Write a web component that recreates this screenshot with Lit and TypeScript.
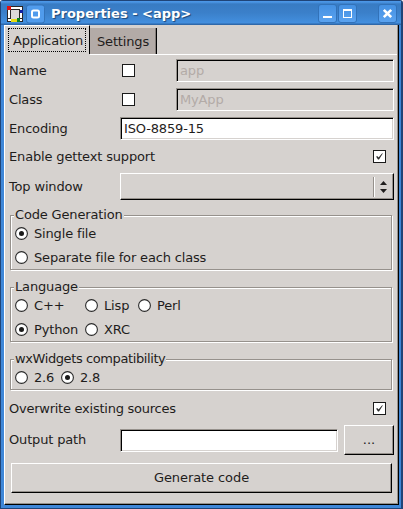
import { LitElement, html, css, svg } from "lit";
import { customElement, property } from "lit/decorators.js";
import { classMap } from "lit/directives/class-map.js";

@customElement("check-box")
class CheckBox extends LitElement {
  @property({ type: Boolean }) checked = false;
  static styles = css`
    :host { display: block; width: 13px; height: 13px; flex: none; }
    svg { display: block; }
  `;
  render() {
    return html`<svg width="13" height="13" viewBox="0 0 13 13">
      <rect x="0.5" y="0.5" width="12" height="12" fill="#fff" stroke="#1a1a1a" />
      ${this.checked
        ? svg`<path d="M3 6.6l1.6-.3 1 1.3L9.2 3.3l.6.3L6 9.6H5z" fill="#2a2a2a" />`
        : ""}
    </svg>`;
  }
}

@customElement("radio-item")
class RadioItem extends LitElement {
  @property() label = "";
  @property({ type: Boolean }) checked = false;
  static styles = css`
    :host { display: flex; align-items: center; height: 24px; }
    svg { display: block; flex: none; margin: -1px 6px 0 0; }
    span { line-height: 16px; white-space: pre; }
  `;
  render() {
    return html`<svg width="13" height="13" viewBox="0 0 13 13">
        <circle cx="6.5" cy="6.5" r="5.9" fill="#fff" stroke="#2a2a2a" stroke-width="1.1" />
        ${this.checked ? svg`<circle cx="6.5" cy="6.5" r="2.5" fill="#1a1a1a" />` : ""}
      </svg><span>${this.label}</span>`;
  }
}

@customElement("app-root")
class AppRoot extends LitElement {
  static styles = css`
    :host {
      display: block; width: 403px; height: 509px; overflow: hidden;
      font: 13px/16px "DejaVu Sans", sans-serif; color: #1f1d1c;
      letter-spacing: -0.16px;
    }
    * { box-sizing: border-box; }
    .window {
      width: 403px; height: 509px; display: flex; flex-direction: column;
      background: #3f87d8; padding: 0 2px 3px 2px;
      border: 1px solid #1f4478; border-right-width: 2px;
      border-radius: 3px 3px 0 0;
    }
    .title {
      height: 24px; flex: none; display: flex; align-items: center;
      margin: 0 -2px; padding: 1px 4px 0 6px;
      background: linear-gradient(#4b96e6 0, #4b96e6 1px, #387bc3 3px, #3b80ca 12px, #438fdf 22px, #2e68aa 23px);
    }
    .title svg { display: block; flex: none; }
    .caption {
      flex: 1; margin-left: 6px; color: #fff; font-weight: bold; font-size: 13px;
      letter-spacing: 0; text-shadow: 1px 1px 1px #1c4677; white-space: pre;
    }
    .wbtn {
      width: 19px; height: 19px; flex: none; border-radius: 3px;
      border: 1px solid #3272b9; background: linear-gradient(#4490e2, #5ba3f0);
    }
    .max { margin-left: 1px; }
    .close { margin-left: 21px; }
    .client {
      flex: 1; margin-left: 1px; display: flex; flex-direction: column; background: #d6d2cf;
      border-left: 1px solid #fff; border-right: 1px solid #000; border-bottom: 1px solid #000;
      box-shadow: inset -1px -1px 0 #96918c;
    }
    .tabs { display: flex; align-items: flex-end; height: 29px; flex: none; }
    .active {
      width: 85px; height: 29px; padding: 2px 3px 0; align-self: flex-start;
      border-top: 1px solid #fff; border-right: 1px solid #000;
    }
    .focus { height: 24px; width: 78px; border: 1px dotted #000; padding: 4px 0 0 4px; white-space: nowrap; letter-spacing: -0.25px; }
    .other {
      width: 67px; height: 26px; padding: 6px 0 0 7px; background: #b3aba7;
      border-right: 1px solid #000; box-shadow: inset -1px 0 0 #857e7a; white-space: nowrap;
    }
    .page { flex: 1; padding: 4px 4px 0 4px; display: flex; flex-direction: column; }
    .edge { height: 1px; background: #fff; margin-left: 85px; margin-right: 1px; flex: none; }
    .row { display: flex; align-items: center; flex: none; height: 23px; margin-bottom: 6px; }
    .label { width: 111px; flex: none; white-space: nowrap; }
    .wide { flex: 1; }
    .entry {
      flex: 1; height: 23px; padding: 3px 2px 0 3px; background: #fff;
      border: 1px solid; border-color: #96918c #fff #fff #96918c;
      box-shadow: inset 1px 1px 0 #000, inset -1px -1px 0 #d6d2cf;
    }
    .off { background: #d6d2cf; color: #b3aba7; }
    .lead { margin: 0 41px 0 2px; }
    .tail { margin-right: 8px; }
    .raised {
      border: 1px solid; border-color: #fff #000 #000 #fff;
      box-shadow: inset -1px -1px 0 #96918c;
      display: flex; align-items: center; justify-content: center; flex: none;
    }
    .enable { height: 21px; }
    .top { height: 27px; margin-bottom: 15px; }
    .row .combo { flex: 1; height: 27px; justify-content: flex-end; padding-right: 5px; }
    .group {
      flex: none; margin: 0 2px 17px 1px; border: 1px solid #96918c; height: 55px;
      box-shadow: 1px 1px 0 #fff, inset 1px 1px 0 #fff; padding-left: 4px;
    }
    .group.short { height: 31px; margin-bottom: 7px; }
    .legend {
      display: block; width: fit-content; margin: -9px 0 -1px -1px; padding: 0 1px;
      background: #d6d2cf; height: 16px; line-height: 16px; white-space: nowrap;
    }
    .short .legend { letter-spacing: -0.4px; }
    .line { display: flex; }
    .c1 { width: 70px; }
    .c2 { width: 53px; }
    .c3 { width: 46px; }
    .over { height: 23px; margin-bottom: 5px; letter-spacing: -0.25px; }
    .out { height: 30px; margin-bottom: 8px; }
    .browse { width: 50px; height: 30px; margin-left: 6px; letter-spacing: 0; }
    .generate { height: 30px; margin: 0 2px 0 2px; letter-spacing: -0.08px; }
  `;

  private group(legend: string, lines: unknown, short = false) {
    return html`<div class=${classMap({ group: true, short })}>
      <span class="legend">${legend}</span>${lines}
    </div>`;
  }

  render() {
    return html`<div class="window">
      <div class="title">
        <svg width="16" height="16" viewBox="0 0 16 16" shape-rendering="crispEdges">
          <path d="M0 0h16v16H0z" fill="#fff" />
          <path d="M4 4h9v9H4z" fill="#dedad8" />
          <path d="M4 0h12v1H4zM0 4h1v12H0zM15 1h1v3h-1zM15 7h1v9h-1zM4 3h9v1H4zM3 4h1v9H3zM0 12h4v1H0zM12 4h1v8h-1zM13 12h3v1h-3zM0 15h4v1H0zM13 15h3v1h-3z" fill="#2b2626" />
          <path d="M0 0h4v4H0z" fill="#e01010" />
          <path d="M13 4h3v3h-3z" fill="#1020a0" />
          <path d="M4 13h6v3H4z" fill="#e8dc10" />
          <path d="M10 12h3v4h-3z" fill="#108020" />
        </svg>
        <svg width="22" height="20" viewBox="0 0 22 20">
          <rect x="3.5" y="1" width="18" height="18" rx="2.5" fill="#509bec" stroke="#3272b9" />
          <rect x="9" y="6.5" width="7" height="7" rx="1.5" fill="none" stroke="#fff" stroke-width="2" />
        </svg>
        <div class="caption">Properties - &lt;app&gt;</div>
        <div class="wbtn"><svg width="17" height="17" viewBox="0 0 17 17"><path d="M4 11h9v2H4z" fill="#fff" /></svg></div>
        <div class="wbtn max"><svg width="17" height="17" viewBox="0 0 17 17"><path d="M4 4h9v9H4zM5 6v6h7V6z" fill="#fff" fill-rule="evenodd" /></svg></div>
        <div class="wbtn close"><svg width="17" height="17" viewBox="0 0 17 17"><path d="M4.8 4.8l7.4 7.4M12.2 4.8l-7.4 7.4" stroke="#fff" stroke-width="2.6" /></svg></div>
      </div>
      <div class="client">
        <div class="tabs">
          <div class="active"><div class="focus">Application</div></div>
          <div class="other">Settings</div>
        </div>
        <div class="edge"></div>
        <div class="page">
          <div class="row"><span class="label">Name</span><check-box class="lead"></check-box><div class="entry off">app</div></div>
          <div class="row"><span class="label">Class</span><check-box class="lead"></check-box><div class="entry off">MyApp</div></div>
          <div class="row"><span class="label">Encoding</span><div class="entry">ISO-8859-15</div></div>
          <div class="row enable"><span class="wide">Enable gettext support</span><check-box class="tail" checked></check-box></div>
          <div class="row top"><span class="label">Top window</span>
            <div class="raised combo"><svg width="15" height="20" viewBox="0 0 15 20">
              <path d="M0 0h1v20H0z" fill="#96918c" /><path d="M1 0h1v20H1z" fill="#fff" />
              <path d="M7 8l3.5-4L14 8zM7 12l3.5 4 3.5-4z" fill="#1f1d1c" />
            </svg></div>
          </div>
          ${this.group("Code Generation", html`
            <radio-item label="Single file" checked></radio-item>
            <radio-item label="Separate file for each class"></radio-item>`)}
          ${this.group("Language", html`
            <div class="line"><radio-item class="c1" label="C++"></radio-item><radio-item class="c2" label="Lisp"></radio-item><radio-item label="Perl"></radio-item></div>
            <div class="line"><radio-item class="c1" label="Python" checked></radio-item><radio-item label="XRC"></radio-item></div>`)}
          ${this.group("wxWidgets compatibility", html`
            <div class="line"><radio-item class="c3" label="2.6"></radio-item><radio-item label="2.8" checked></radio-item></div>`, true)}
          <div class="row over"><span class="wide">Overwrite existing sources</span><check-box class="tail" checked></check-box></div>
          <div class="row out"><span class="label">Output path</span><div class="entry"></div><div class="raised browse">...</div></div>
          <div class="raised generate">Generate code</div>
        </div>
      </div>
    </div>`;
  }
}
